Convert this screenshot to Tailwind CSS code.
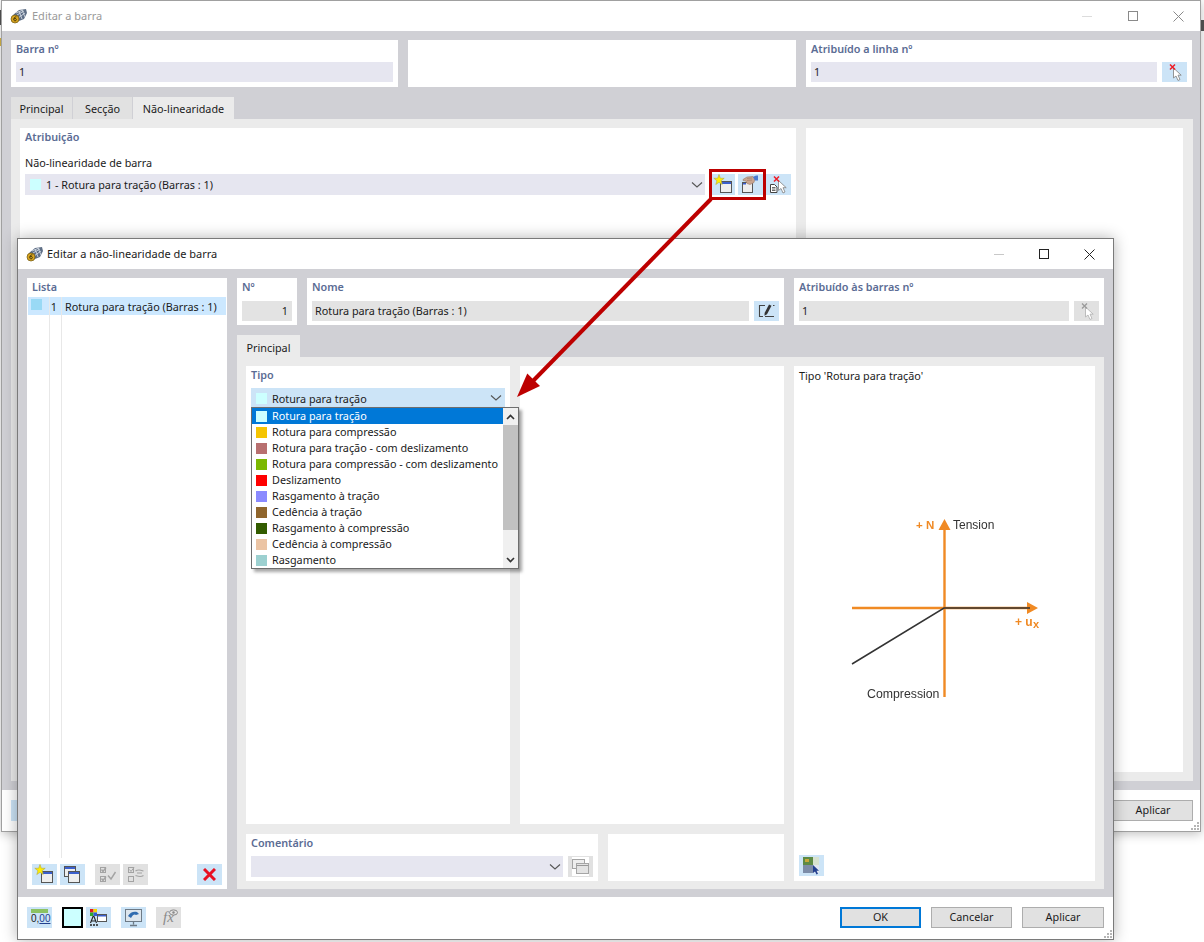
<!DOCTYPE html>
<html lang="pt">
<head>
  <meta charset="UTF-8" />
  <title>Editar a não-linearidade de barra</title>
  <script src="https://cdn.jsdelivr.net/npm/@tailwindcss/browser@4"></script>
</head>
<body class="bg-white">

<!-- shared icons, drawn on the 25x21 button grid -->
<svg class="hidden">
  <defs>
    <symbol id="i-app" viewBox="0 0 18 16">
      <path d="M3 7 9 2l7-1 1 4-3 6-5 2z" fill="#5f6f86"/>
      <path d="M6 5l7-3M7 7l7-4M8 10l7-5M9 3l3 8M12 2l3 7" stroke="#cfd6e0" stroke-width=".9" fill="none"/>
      <circle cx="5" cy="11" r="4" fill="#d9a520" stroke="#6b5510" stroke-width=".7"/>
      <path d="M6.400 8.800C4.600 8.800 3.800 10 3.800 11.400c0 1 .6 1.500 1.300 1.500s1.300-.6 1.300-1.300-.6-1.200-1.300-1.200-1.200.4-1.300 1" stroke="#3d3208" stroke-width=".9" fill="none"/>
    </symbol>
    <symbol id="i-new" viewBox="0 0 25 21">
      <rect x="9.500" y="7.500" width="11" height="11" fill="#eeeeee" stroke="#555"/>
      <rect x="10" y="8" width="10" height="2" fill="#3a5fcd"/>
      <path d="M8 0.500l1.300 3.700 3.900.1-3.100 2.400 1.100 3.800L8 8.300l-3.200 2.200 1.100-3.800-3.100-2.400 3.900-.1z" fill="#ffee00" stroke="#b5a93a" stroke-width=".6"/>
    </symbol>
    <symbol id="i-hand" viewBox="0 0 25 21">
      <rect x="4.500" y="8.500" width="10" height="10" fill="#eeeeee" stroke="#555"/>
      <rect x="5" y="9" width="3" height="1.500" fill="#3a5fcd"/>
      <path d="M5 5.500l4-2.500 6-.5 2 2-1 4-4 2-3-1-1-2.500-3-.5z" fill="#c9a58f" stroke="#9b7a68" stroke-width=".6"/>
      <path d="M9 4.500l5-.5M9 6.500l5-.5" stroke="#9b7a68" stroke-width=".6"/>
      <path d="M15 3c2-1.500 3-1.500 5-1.500v5h-3z" fill="#4a7bd0"/>
    </symbol>
    <symbol id="i-copy" viewBox="0 0 25 21">
      <rect x="4.500" y="2.500" width="11" height="10" fill="#eeeeee" stroke="#555"/>
      <rect x="5" y="3" width="10" height="2" fill="#3a5fcd"/>
      <rect x="8.500" y="7.500" width="11" height="11" fill="#eeeeee" stroke="#555"/>
      <rect x="9" y="8" width="10" height="2" fill="#3a5fcd"/>
    </symbol>
    <symbol id="i-cursor-x" viewBox="0 0 25 21">
      <path d="M11.500 6v10l2.500-2 2 4.500 2-1-2-4.300h3.200z" fill="#fff" stroke="#8a8a8a" stroke-width=".9"/>
      <path d="M8 2.500l5 5M13 2.500l-5 5" stroke="#ee1c25" stroke-width="1.500"/>
    </symbol>
    <symbol id="i-cursor-off" viewBox="0 0 25 21">
      <path d="M11.500 6v10l2.500-2 2 4.500 2-1-2-4.300h3.200z" fill="#fff" stroke="#b5b5b5" stroke-width=".9"/>
      <path d="M8 2.500l5 5M13 2.500l-5 5" stroke="#9a9a9a" stroke-width="1.300"/>
    </symbol>
    <symbol id="i-doc-cursor" viewBox="0 0 25 21">
      <path d="M4.500 10.500h4l2.500 2.500v5.500H4.500z" fill="#fff" stroke="#444"/>
      <path d="M6 13.500h3.500M6 15h3.500M6 16.500h3.500" stroke="#444" stroke-width=".8"/>
      <path d="M12.500 6.500v10l2.500-2 2 4.500 2-1-2-4.300h3.200z" fill="#fff" stroke="#8a8a8a" stroke-width=".9"/>
      <path d="M8 2.500l5 5M13 2.500l-5 5" stroke="#ee1c25" stroke-width="1.500"/>
    </symbol>
    <symbol id="i-pencil" viewBox="0 0 25 21">
      <path d="M11 4.500H5.500v11H9M11 15.500h9" stroke="#444" stroke-width="1.100" fill="none"/>
      <path d="M19 4.500h1.500" stroke="#444" stroke-width="1.100"/>
      <path d="M15 3.500l2.500 1.200-4.500 8.500-2.500 1.500.1-2.800z" fill="#333"/>
    </symbol>
    <symbol id="i-checks" viewBox="0 0 25 21">
      <g fill="none" stroke="#a3a3a3">
        <rect x="5.500" y="3.500" width="5" height="5"/><rect x="5.500" y="12.500" width="5" height="5"/>
        <path d="M6.500 5.500l1.500 2 3-4M6.500 14.500l1.500 2 3-4M13 11.500l3 3.500 4.500-7" stroke-width="1.400"/>
      </g>
    </symbol>
    <symbol id="i-uncheck" viewBox="0 0 25 21">
      <g fill="none" stroke="#a3a3a3">
        <rect x="5.500" y="3.500" width="5" height="5"/><rect x="5.500" y="12.500" width="5" height="5"/>
        <path d="M6.500 5.500l1.500 2 3-4"/>
        <path d="M12.500 7c3-2 5-1 8 0M20.500 11.500c-3 2-5 1-8 0M14 9h5" stroke-width="1.200"/>
      </g>
    </symbol>
    <symbol id="i-copy-off" viewBox="0 0 25 21">
      <rect x="4" y="1" width="17" height="19" fill="#fff"/>
      <rect x="4.500" y="3.500" width="12" height="9" fill="#eee" stroke="#a5a5a5"/>
      <rect x="8.500" y="7.500" width="12" height="10" fill="#e3e3e3" stroke="#a5a5a5"/>
      <path d="M8.500 9.500h12" stroke="#999"/>
    </symbol>
    <symbol id="i-colors" viewBox="0 0 25 21">
      <rect x="4" y="2" width="3.500" height="3.500" fill="#e01b24"/><rect x="7.500" y="2" width="3.500" height="3.500" fill="#f2d600"/>
      <rect x="4" y="5.500" width="3.500" height="3.500" fill="#31a82e"/><rect x="7.500" y="5.500" width="3.500" height="3.500" fill="#3159d6"/>
      <path d="M4.500 16l2.500-6.500h1l2.500 6.500M5.500 14h4" stroke="#222" stroke-width="1.100" fill="none"/>
      <path d="M4 18h2M7 18h2M10 18h2" stroke="#222" stroke-width="1.300"/>
      <rect x="11.500" y="7.500" width="9" height="7" fill="#fff" stroke="#555"/>
      <rect x="12" y="8" width="8" height="1.500" fill="#3a5fcd"/>
    </symbol>
    <symbol id="i-monitor" viewBox="0 0 25 21">
      <rect x="4.500" y="2.500" width="16" height="12" fill="#dde6ee" stroke="#6d7a86"/>
      <path d="M7 9c2-4 6-5 9-4l2 2-3 1c-1-1-3-1-5 3z" fill="#2f6bb0"/>
      <path d="M12.500 15v2.500M9 18.500h7" stroke="#6d7a86" stroke-width="1.300"/>
    </symbol>
    <symbol id="i-picture" viewBox="0 0 25 21">
      <rect x="4" y="2" width="10" height="8" fill="#5d8a45"/>
      <rect x="6" y="4" width="4" height="3" fill="#c7a83a"/>
      <rect x="14" y="2" width="6" height="8" fill="#d7e2cf"/>
      <rect x="4" y="10" width="10" height="8" fill="#7c8ca8"/>
      <rect x="14" y="10" width="6" height="8" fill="#dfe6f2"/>
      <path d="M14 10v8l2-1.500 1.500 3 1.500-.8-1.500-2.900h2.500z" fill="#23408f"/>
    </symbol>
    <symbol id="i-grip" viewBox="0 0 9 9">
      <path d="M6 0h2v2H6zM3 3h2v2H3zM6 3h2v2H6zM0 6h2v2H0zM3 6h2v2H3zM6 6h2v2H6z" fill="#b5b5b5"/>
    </symbol>
    <symbol id="i-chev" viewBox="0 0 12 6">
      <path d="M1 .5l5 4.500 5-4.500" fill="none" stroke="#555" stroke-width="1.100"/>
    </symbol>
  </defs>
</svg>

<div class="relative w-[1204px] h-[942px] overflow-hidden whitespace-nowrap font-['Noto_Sans',sans-serif] text-[10.8px] text-[#1b1b1b]">

  <!-- bits of the desktop behind the windows -->
  <div class="absolute left-0 top-[10px] w-px h-[15px] bg-[#555]"></div>
  <div class="absolute left-0 top-[38px] w-px h-[8px] bg-[#d9b84a]"></div>
  <div class="absolute right-0 top-[20px] w-[3px] h-[11px] bg-[#555]"></div>

  <!-- background window: Editar a barra -->
  <div class="absolute left-[1px] top-0 w-[1200px] h-[832px] flex flex-col bg-white border border-[#a0a0a0] shadow-[0_2px_10px_rgba(0,0,0,0.25)]">
    <div class="h-[30px] shrink-0 flex items-center pl-[8px]">
      <svg class="w-[18px] h-[16px]"><use href="#i-app"/></svg>
      <span class="ml-[4px] text-[11px] text-[#9a9a9a]">Editar a barra</span>
      <div class="ml-auto flex items-center text-[#a0a0a0]">
        <span class="w-[10px] h-px bg-[#dcdcdc] mr-[36px]"></span>
        <span class="w-[10px] h-[10px] border border-[#8a8a8a] mr-[35px]"></span>
        <svg class="w-[11px] h-[11px] mr-[16px]" viewBox="0 0 11 11"><path d="M.5.5l10 10M10.500.5l-10 10" stroke="#8a8a8a"/></svg>
      </div>
    </div>
    <div class="flex-1 min-h-0 bg-[#d0d0d5] pl-[9px] pr-[7px] pt-[9px] pb-[9px] flex flex-col">
      <div class="grid grid-cols-[387px_388px_386px] gap-x-[10px] h-[47px]">
        <div class="bg-white px-[5px] pt-[1px]">
          <div class="h-[16px] leading-[16px] font-semibold text-[#5b6c94]">Barra nº</div>
          <div class="mt-[5px] h-[20px] leading-[20px] bg-[#e6e6f0] pl-[3px]">1</div>
        </div>
        <div class="bg-white"></div>
        <div class="bg-white px-[5px] pt-[1px]">
          <div class="h-[16px] leading-[16px] font-semibold text-[#5b6c94]">Atribuído a linha nº</div>
          <div class="mt-[5px] flex gap-[5px]">
            <div class="flex-1 h-[20px] leading-[20px] bg-[#e6e6f0] pl-[3px]">1</div>
            <div class="w-[25px] h-[20px] bg-[#cce4f7]"><svg class="w-[25px] h-[21px]"><use href="#i-cursor-x"/></svg></div>
          </div>
        </div>
      </div>
      <div class="mt-[10px] h-[22px] flex gap-px shrink-0">
        <div class="w-[61px] pt-[2px] bg-[#e1e1e1] flex items-center justify-center">Principal</div>
        <div class="w-[59px] pt-[2px] bg-[#e1e1e1] flex items-center justify-center">Secção</div>
        <div class="w-[101px] pt-[2px] bg-[#ebebeb] flex items-center justify-center">Não-linearidade</div>
      </div>
      <div class="flex-1 min-h-0 bg-[#ebebeb] p-[9px] grid grid-cols-[776px_377px] gap-x-[10px]">
        <div class="bg-white px-[5px] pt-[1px]">
          <div class="h-[16px] leading-[16px] font-semibold text-[#5b6c94]">Atribuição</div>
          <div class="mt-[10px] h-[16px] leading-[16px]">Não-linearidade de barra</div>
          <div class="mt-[3px] flex">
            <div class="w-[680px] h-[21px] bg-[#e6e6f0] flex items-center pl-[5px]">
              <span class="w-[11px] h-[11px] bg-[#ccffff]"></span>
              <span class="ml-[5px] pt-[2px]">1 - Rotura para tração (Barras : 1)</span>
              <svg class="ml-auto mr-[2px] w-[12px] h-[6px]"><use href="#i-chev"/></svg>
            </div>
            <div class="ml-[7px] w-[23px] h-[21px] bg-[#cce4f7] overflow-hidden"><svg class="w-[25px] h-[21px] -ml-[1px]"><use href="#i-new"/></svg></div>
            <div class="ml-[3px] w-[25px] h-[21px] bg-[#cce4f7]"><svg class="w-[25px] h-[21px]"><use href="#i-hand"/></svg></div>
            <div class="ml-[3px] w-[25px] h-[21px] bg-[#cce4f7]"><svg class="w-[25px] h-[21px]"><use href="#i-doc-cursor"/></svg></div>
          </div>
        </div>
        <div class="bg-white"></div>
      </div>
    </div>
    <div class="h-[41px] shrink-0 relative flex items-center pl-[9px] pr-[7px]">
      <div class="w-[25px] h-[21px] bg-[#cce4f7]"></div>
      <div class="ml-auto w-[80px] h-[21px] bg-[#e1e1e1] border border-[#adadad] flex items-center justify-center">Aplicar</div>
      <svg class="absolute right-0 bottom-0 w-[9px] h-[9px]"><use href="#i-grip"/></svg>
    </div>
  </div>

  <!-- foreground window: Editar a não-linearidade de barra -->
  <div class="absolute left-[17px] top-[238px] w-[1097px] h-[702px] flex flex-col bg-white border border-[#7a7a7a] shadow-[0_0_14px_rgba(0,0,0,0.3)]">
    <div class="h-[30px] shrink-0 flex items-center pl-[8px]">
      <svg class="w-[18px] h-[16px]"><use href="#i-app"/></svg>
      <span class="ml-[3px] text-[11px]">Editar a não-linearidade de barra</span>
      <div class="ml-auto flex items-center">
        <span class="w-[10px] h-px bg-[#c8c8c8] mr-[35px]"></span>
        <span class="w-[10px] h-[10px] border border-[#222] mr-[35px]"></span>
        <svg class="w-[11px] h-[11px] mr-[18px]" viewBox="0 0 11 11"><path d="M.5.5l10 10M10.500.5l-10 10" stroke="#222"/></svg>
      </div>
    </div>

    <div class="h-[628px] shrink-0 bg-[#d0d0d5] pl-[9px] pr-[9px] pt-[9px] pb-[8px] grid grid-cols-[200px_867px] gap-x-[10px]">
      <!-- Lista -->
      <div class="bg-white flex flex-col">
        <div class="h-[19px] leading-[18px] pl-[5px] font-semibold text-[#5b6c94]">Lista</div>
        <div class="flex-1 min-h-0 mx-px relative">
          <div class="h-[18px] bg-[#cce8ff] flex items-center">
            <span class="ml-[3px] w-[11px] h-[11px] -mt-[3px] bg-[#99d9f5]"></span>
            <span class="w-[15px] pt-[2px] text-right">1</span>
            <span class="ml-[8px] pt-[2px]">Rotura para tração (Barras : 1)</span>
          </div>
          <div class="absolute left-[21px] top-0 bottom-[6px] w-px bg-[#e8e8e8]"></div>
          <div class="absolute left-[33px] top-0 bottom-[6px] w-px bg-[#e8e8e8]"></div>
        </div>
        <div class="h-[25px] shrink-0 flex pl-[5px] pr-[5px]">
          <div class="w-[25px] h-[21px] bg-[#cce4f7]"><svg class="w-[25px] h-[21px]"><use href="#i-new"/></svg></div>
          <div class="ml-[3px] w-[25px] h-[21px] bg-[#cce4f7]"><svg class="w-[25px] h-[21px]"><use href="#i-copy"/></svg></div>
          <div class="ml-[10px] w-[25px] h-[21px] bg-[#e1e1e1]"><svg class="w-[25px] h-[21px]"><use href="#i-checks"/></svg></div>
          <div class="ml-[3px] w-[25px] h-[21px] bg-[#e1e1e1]"><svg class="w-[25px] h-[21px]"><use href="#i-uncheck"/></svg></div>
          <div class="ml-auto w-[25px] h-[21px] bg-[#cce4f7] flex items-center justify-center">
            <svg class="w-[13px] h-[13px]" viewBox="0 0 13 13"><path d="M1 1l11 11M12 1L1 12" stroke="#e81123" stroke-width="3"/></svg>
          </div>
        </div>
      </div>

      <div class="flex flex-col min-h-0">
        <div class="grid grid-cols-[60px_477px_310px] gap-x-[10px] h-[47px] shrink-0">
          <div class="bg-white px-[5px] pt-[1px]">
            <div class="h-[16px] leading-[16px] font-semibold text-[#5b6c94]">Nº</div>
            <div class="mt-[6px] h-[20px] leading-[20px] bg-[#e3e3e3] text-right pr-[4px]">1</div>
          </div>
          <div class="bg-white px-[5px] pt-[1px]">
            <div class="h-[16px] leading-[16px] font-semibold text-[#5b6c94]">Nome</div>
            <div class="mt-[6px] flex gap-[5px]">
              <div class="flex-1 h-[20px] leading-[20px] bg-[#e3e3e3] pl-[3px]">Rotura para tração (Barras : 1)</div>
              <div class="w-[25px] h-[20px] bg-[#cce4f7]"><svg class="w-[25px] h-[21px]"><use href="#i-pencil"/></svg></div>
            </div>
          </div>
          <div class="bg-white px-[5px] pt-[1px]">
            <div class="h-[16px] leading-[16px] font-semibold text-[#5b6c94]">Atribuído às barras nº</div>
            <div class="mt-[6px] flex gap-[5px]">
              <div class="flex-1 h-[20px] leading-[20px] bg-[#e3e3e3] pl-[3px]">1</div>
              <div class="w-[25px] h-[20px] bg-[#e1e1e1]"><svg class="w-[25px] h-[21px]"><use href="#i-cursor-off"/></svg></div>
            </div>
          </div>
        </div>

        <div class="mt-[10px] h-[22px] shrink-0 w-[63px] pt-[4px] bg-[#ebebeb] flex items-center justify-center">Principal</div>

        <div class="flex-1 min-h-0 bg-[#ebebeb] pl-[9px] pr-[9px] pt-[9px] pb-[8px] flex gap-x-[10px]">
          <div class="w-[538px] flex flex-col">
            <div class="h-[458px] grid grid-cols-[264px_264px] gap-x-[10px]">
              <div class="bg-white relative px-[5px] pt-[1px]">
                <div class="h-[16px] leading-[16px] font-semibold text-[#5b6c94]">Tipo</div>
                <div class="mt-[5px] h-[20px] bg-[#cce4f7] flex items-center pl-[5px]">
                  <span class="w-[11px] h-[11px] bg-[#ccffff]"></span>
                  <span class="ml-[5px] pt-[2px]">Rotura para tração</span>
                  <svg class="ml-auto mr-[3px] w-[12px] h-[6px]"><use href="#i-chev"/></svg>
                </div>

                <!-- open dropdown -->
                <div class="absolute left-[5px] top-[41px] w-[268px] h-[162px] z-10 bg-white border border-[#6e6e6e] shadow-[3px_3px_3px_rgba(0,0,0,0.35)] flex">
                  <div class="w-[251px]">
                    <div class="h-[16px] bg-[#0078d7] text-white flex items-center pl-[4px]"><span class="w-[11px] h-[11px] bg-[#ccffff] mr-[5px]"></span>Rotura para tração</div>
                    <div class="h-[16px] flex items-center pl-[4px]"><span class="w-[11px] h-[11px] bg-[#f5c400] mr-[5px]"></span>Rotura para compressão</div>
                    <div class="h-[16px] flex items-center pl-[4px]"><span class="w-[11px] h-[11px] bg-[#b87070] mr-[5px]"></span>Rotura para tração - com deslizamento</div>
                    <div class="h-[16px] flex items-center pl-[4px]"><span class="w-[11px] h-[11px] bg-[#7cb800] mr-[5px]"></span>Rotura para compressão - com deslizamento</div>
                    <div class="h-[16px] flex items-center pl-[4px]"><span class="w-[11px] h-[11px] bg-[#ff0000] mr-[5px]"></span>Deslizamento</div>
                    <div class="h-[16px] flex items-center pl-[4px]"><span class="w-[11px] h-[11px] bg-[#8a8aff] mr-[5px]"></span>Rasgamento à tração</div>
                    <div class="h-[16px] flex items-center pl-[4px]"><span class="w-[11px] h-[11px] bg-[#8f652c] mr-[5px]"></span>Cedência à tração</div>
                    <div class="h-[16px] flex items-center pl-[4px]"><span class="w-[11px] h-[11px] bg-[#335c00] mr-[5px]"></span>Rasgamento à compressão</div>
                    <div class="h-[16px] flex items-center pl-[4px]"><span class="w-[11px] h-[11px] bg-[#ebc4a4] mr-[5px]"></span>Cedência à compressão</div>
                    <div class="h-[16px] flex items-center pl-[4px]"><span class="w-[11px] h-[11px] bg-[#9cd0d0] mr-[5px]"></span>Rasgamento</div>
                  </div>
                  <div class="flex-1 bg-[#f0f0f0] flex flex-col">
                    <div class="h-[17px] flex items-center justify-center"><svg class="w-[9px] h-[6px]" viewBox="0 0 9 6"><path d="M1 5l3.500-3.500L8 5" fill="none" stroke="#333" stroke-width="1.600"/></svg></div>
                    <div class="h-[105px] bg-[#c1c1c1]"></div>
                    <div class="mt-auto h-[17px] flex items-center justify-center"><svg class="w-[9px] h-[6px]" viewBox="0 0 9 6"><path d="M1 1l3.500 3.500L8 1" fill="none" stroke="#333" stroke-width="1.600"/></svg></div>
                  </div>
                </div>
              </div>
              <div class="bg-white"></div>
            </div>
            <div class="mt-[10px] h-[47px] grid grid-cols-[352px_176px] gap-x-[10px]">
              <div class="bg-white px-[5px] pt-[1px]">
                <div class="h-[16px] leading-[16px] font-semibold text-[#5b6c94]">Comentário</div>
                <div class="mt-[5px] flex gap-[5px]">
                  <div class="flex-1 h-[21px] bg-[#e6e6f0] flex items-center justify-end"><svg class="mr-[2px] w-[12px] h-[6px]"><use href="#i-chev"/></svg></div>
                  <div class="w-[25px] h-[21px] bg-[#e1e1e1]"><svg class="w-[25px] h-[21px]"><use href="#i-copy-off"/></svg></div>
                </div>
              </div>
              <div class="bg-white"></div>
            </div>
          </div>

          <div class="w-[301px] bg-white flex flex-col">
            <div class="h-[20px] leading-[20px] pl-[5px]">Tipo 'Rotura para tração'</div>
            <svg class="w-[301px] h-[190px] mt-[130px] shrink-0" viewBox="794 516 301 190" style="filter:blur(.4px)">
              <path d="M852 608H1030M944.500 530V697" stroke="#f08a24" stroke-width="2.400" fill="none"/>
              <path d="M938.500 530l6-11 6 11zM1027 602l11 6-11 6z" fill="#f08a24"/>
              <path d="M852 664 944 608H1030" stroke="#333" stroke-width="1.500" fill="none"/>
              <text x="916" y="529" font-family="Liberation Sans" font-size="11.500" font-weight="700" fill="#f08a24">+ N</text>
              <text x="953" y="529" font-family="Liberation Sans" font-size="12" fill="#333">Tension</text>
              <text x="1015" y="626" font-family="Liberation Sans" font-size="12" font-weight="700" fill="#f08a24">+ u</text>
              <text x="1033" y="628" font-family="Liberation Sans" font-size="11" font-weight="700" fill="#f08a24">x</text>
              <text x="867" y="698" font-family="Liberation Sans" font-size="12.300" fill="#333">Compression</text>
            </svg>
            <div class="mt-auto mb-[5px] ml-[5px] w-[25px] h-[21px] bg-[#cce4f7]"><svg class="w-[25px] h-[21px]"><use href="#i-picture"/></svg></div>
          </div>
        </div>
      </div>
    </div>

    <!-- footer -->
    <div class="flex-1 relative flex items-center pl-[9px] pr-[9px] pb-[2px]">
      <div class="w-[25px] h-[21px] bg-[#cce4f7] relative overflow-hidden">
        <div class="mx-[4px] mt-[2px] h-[4px] bg-[#8cc263]"></div>
        <div class="absolute left-[4px] top-[5px] text-[10px] leading-[14px] font-['Liberation_Sans',sans-serif]">0,<span class="underline text-[#23408f]">00</span></div>
      </div>
      <div class="ml-[10px] w-[21px] h-[21px] bg-[#ccffff] border-2 border-black"></div>
      <div class="ml-[3px] w-[25px] h-[21px] bg-[#cce4f7]"><svg class="w-[25px] h-[21px]"><use href="#i-colors"/></svg></div>
      <div class="ml-[10px] w-[25px] h-[21px] bg-[#cce4f7]"><svg class="w-[25px] h-[21px]"><use href="#i-monitor"/></svg></div>
      <div class="ml-[10px] w-[25px] h-[21px] bg-[#e1e1e1] relative flex items-center justify-center font-['Liberation_Serif',serif] italic text-[15px] text-[#8a8a8a]">
        fx
        <svg class="absolute left-[13px] top-[2px] w-[9px] h-[7px]" viewBox="0 0 9 7"><ellipse cx="4.500" cy="3.500" rx="4" ry="2.600" fill="none" stroke="#8a8a8a"/><circle cx="4.500" cy="3.500" r="1.200" fill="#8a8a8a"/></svg>
      </div>
      <div class="ml-auto flex gap-[10px]">
        <div class="w-[81px] h-[21px] bg-[#e1e1e1] border-2 border-[#0078d7] flex items-center justify-center">OK</div>
        <div class="w-[81px] h-[21px] bg-[#e1e1e1] border border-[#adadad] flex items-center justify-center">Cancelar</div>
        <div class="w-[82px] h-[21px] bg-[#e1e1e1] border border-[#adadad] flex items-center justify-center">Aplicar</div>
      </div>
      <svg class="absolute right-0 bottom-0 w-[9px] h-[9px]"><use href="#i-grip"/></svg>
    </div>
  </div>

  <!-- red callout over both windows -->
  <svg class="absolute left-0 top-0 w-[1204px] h-[942px] pointer-events-none" viewBox="0 0 1204 942">
    <rect x="710.500" y="170.500" width="54" height="28" fill="none" stroke="#bd0000" stroke-width="3"/>
    <path d="M711 199 532 382" stroke="#bd0000" stroke-width="4"/>
    <path d="M517 397l10.300-23.500 12.700 12.500z" fill="#bd0000"/>
  </svg>
</div>

</body>
</html>
